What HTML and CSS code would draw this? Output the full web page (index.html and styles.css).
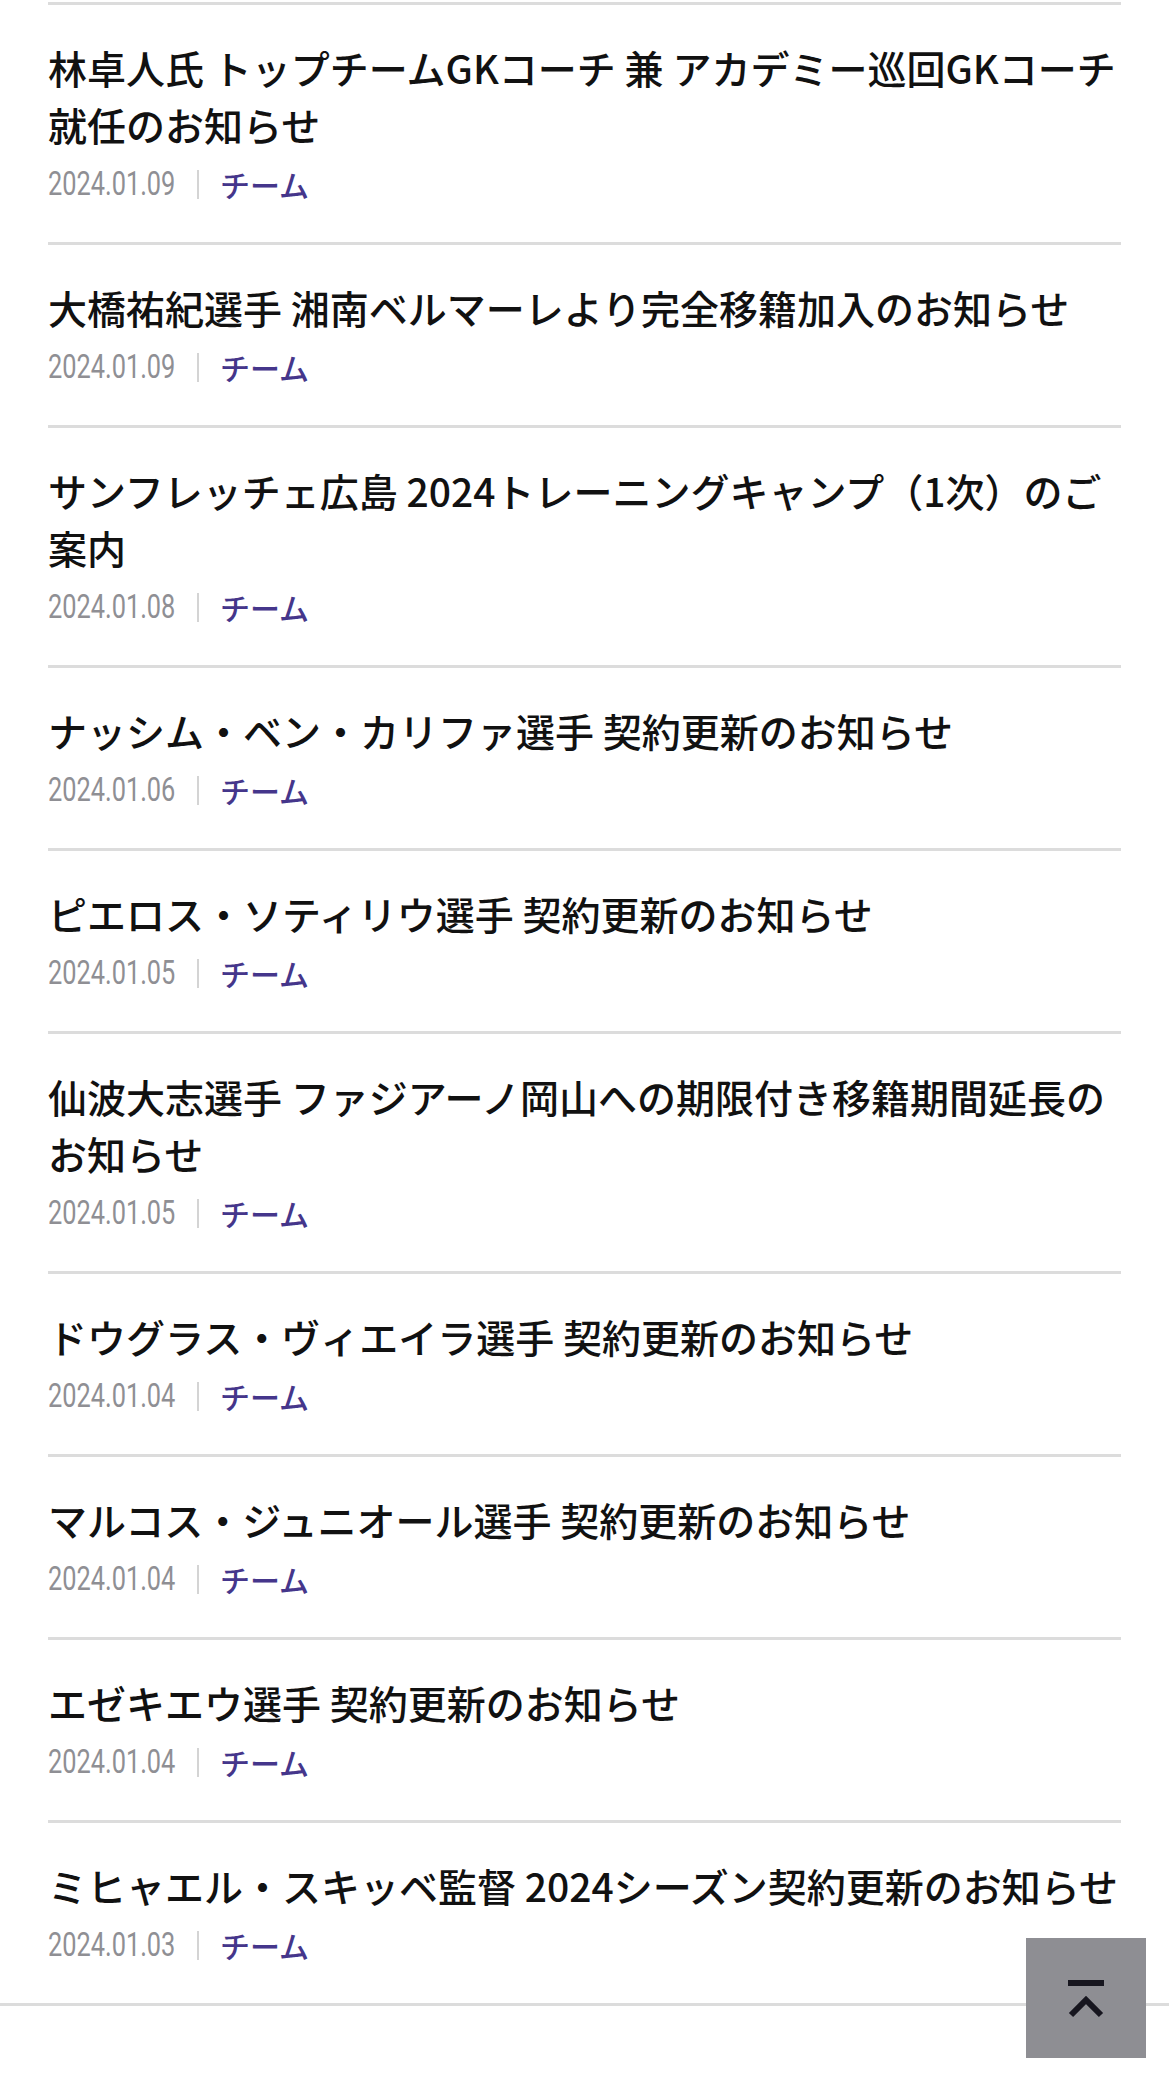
FILE: index.html
```html
<!DOCTYPE html>
<html lang="ja">
<head>
  <meta charset="UTF-8">
  <meta name="viewport" content="width=device-width, initial-scale=1.0">
  <title>ニュース</title>
  <link rel="stylesheet" href="styles.css">
</head>
<body>

  <!-- ニュース一覧 -->
  <section class="news">
    <ul class="news-list">
      <li class="news-item">
        <a class="news-link" href="#">
          <p class="news-title">林卓人氏 トップチームGKコーチ 兼 アカデミー巡回GKコーチ就任のお知らせ</p>
          <div class="news-meta">
            <span class="news-date"><span>2024.01.09</span></span>
            <span class="news-sep"></span>
            <span class="news-cat">チーム</span>
          </div>
        </a>
      </li>
      <li class="news-item">
        <a class="news-link" href="#">
          <p class="news-title">大橋祐紀選手 湘南ベルマーレより完全移籍加入のお知らせ</p>
          <div class="news-meta">
            <span class="news-date"><span>2024.01.09</span></span>
            <span class="news-sep"></span>
            <span class="news-cat">チーム</span>
          </div>
        </a>
      </li>
      <li class="news-item">
        <a class="news-link" href="#">
          <p class="news-title">サンフレッチェ広島 2024トレーニングキャンプ（1次）のご案内</p>
          <div class="news-meta">
            <span class="news-date"><span>2024.01.08</span></span>
            <span class="news-sep"></span>
            <span class="news-cat">チーム</span>
          </div>
        </a>
      </li>
      <li class="news-item">
        <a class="news-link" href="#">
          <p class="news-title">ナッシム・ベン・カリファ選手 契約更新のお知らせ</p>
          <div class="news-meta">
            <span class="news-date"><span>2024.01.06</span></span>
            <span class="news-sep"></span>
            <span class="news-cat">チーム</span>
          </div>
        </a>
      </li>
      <li class="news-item">
        <a class="news-link" href="#">
          <p class="news-title">ピエロス・ソティリウ選手 契約更新のお知らせ</p>
          <div class="news-meta">
            <span class="news-date"><span>2024.01.05</span></span>
            <span class="news-sep"></span>
            <span class="news-cat">チーム</span>
          </div>
        </a>
      </li>
      <li class="news-item">
        <a class="news-link" href="#">
          <p class="news-title">仙波大志選手 ファジアーノ岡山への期限付き移籍期間延長のお知らせ</p>
          <div class="news-meta">
            <span class="news-date"><span>2024.01.05</span></span>
            <span class="news-sep"></span>
            <span class="news-cat">チーム</span>
          </div>
        </a>
      </li>
      <li class="news-item">
        <a class="news-link" href="#">
          <p class="news-title">ドウグラス・ヴィエイラ選手 契約更新のお知らせ</p>
          <div class="news-meta">
            <span class="news-date"><span>2024.01.04</span></span>
            <span class="news-sep"></span>
            <span class="news-cat">チーム</span>
          </div>
        </a>
      </li>
      <li class="news-item">
        <a class="news-link" href="#">
          <p class="news-title">マルコス・ジュニオール選手 契約更新のお知らせ</p>
          <div class="news-meta">
            <span class="news-date"><span>2024.01.04</span></span>
            <span class="news-sep"></span>
            <span class="news-cat">チーム</span>
          </div>
        </a>
      </li>
      <li class="news-item">
        <a class="news-link" href="#">
          <p class="news-title">エゼキエウ選手 契約更新のお知らせ</p>
          <div class="news-meta">
            <span class="news-date"><span>2024.01.04</span></span>
            <span class="news-sep"></span>
            <span class="news-cat">チーム</span>
          </div>
        </a>
      </li>
      <li class="news-item">
        <a class="news-link" href="#">
          <p class="news-title">ミヒャエル・スキッベ監督 2024シーズン契約更新のお知らせ</p>
          <div class="news-meta">
            <span class="news-date"><span>2024.01.03</span></span>
            <span class="news-sep"></span>
            <span class="news-cat">チーム</span>
          </div>
        </a>
      </li>
    </ul>
  </section>

  <!-- ページトップへ -->
  <a class="page-top" href="#" aria-label="ページトップへ">
    <svg width="120" height="120" viewBox="0 0 120 120">
      <rect x="42" y="42" width="36" height="6" fill="#17161f"/>
      <polyline points="45,77 60,62 75,77" fill="none" stroke="#17161f" stroke-width="6"/>
    </svg>
  </a>

</body>
</html>
```

FILE: styles.css
```css
/* ベース */
body {
  margin: 0;
  padding-top: 2px;
  background-color: #fff;
  color: #111;
  font-family: "Noto Sans CJK JP", "Noto Sans", sans-serif;
}

/* ニュース一覧 */
.news {
  border-bottom: 3px solid #dcdcdc;
}

.news-list {
  list-style: none;
  margin: 0 48px;
  padding: 0;
  border-top: 3px solid #dcdcdc;
}

.news-item {
  border-bottom: 3px solid #dcdcdc;
}

.news-item:last-child {
  border-bottom: none;
}

.news-link {
  display: block;
  padding: 34px 0 38px;
  color: inherit;
  text-decoration: none;
}

.news-title {
  margin: 0 -6px 0 0;
  font-size: 39px;
  font-weight: 500;
  line-height: 57px;
  color: #111;
}

/* 日付・カテゴリ */
.news-meta {
  display: flex;
  align-items: center;
  height: 40px;
  margin-top: 11px;
}

.news-date {
  width: 125px;
  white-space: nowrap;
  font-family: Roboto, "Liberation Sans", sans-serif;
  font-size: 32.5px;
  color: #8f8f94;
}

.news-date span {
  display: inline-block;
  transform: scaleX(0.78);
  transform-origin: left center;
}

.news-sep {
  width: 2px;
  height: 29px;
  margin: 0 21px 0 24px;
  background-color: #d4d4d4;
}

.news-cat {
  font-size: 30px;
  font-weight: 500;
  color: #45368b;
}

/* ページトップボタン */
.page-top {
  position: fixed;
  right: 23px;
  bottom: 21px;
  width: 120px;
  height: 120px;
  background-color: #8e8e93;
}

.page-top svg {
  display: block;
}
```
